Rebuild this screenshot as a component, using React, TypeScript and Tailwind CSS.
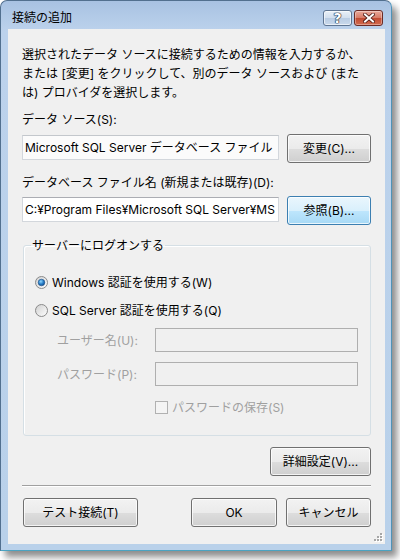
import type { ReactNode } from "react";
import clsx from "clsx";

function PushButton({ children, className, focused = false }: { children: ReactNode; className?: string; focused?: boolean }) {
  return (
    <button
      className={clsx(
        "h-[29px] shrink-0 rounded-[3px] border text-[12px] leading-[19px] text-black shadow-[inset_0_0_0_1px_rgba(255,255,255,0.75)]",
        focused
          ? "border-[#3c7fb1] bg-[linear-gradient(#eaf6fd_0%,#d9f0fc_50%,#bee6fd_51%,#a7d9f5_100%)]"
          : "border-[#707070] bg-[linear-gradient(#f2f2f2_0%,#ebebeb_50%,#dddddd_51%,#cfcfcf_100%)]",
        className
      )}
    >
      {children}
    </button>
  );
}

function Radio({ checked }: { checked?: boolean }) {
  return (
    <svg width="13" height="13" viewBox="0 0 13 13" className="shrink-0">
      <defs>
        <linearGradient id={checked ? "rb-on" : "rb-off"} x1="0" y1="0" x2="1" y2="1">
          <stop offset="0" stopColor="#cfcfcf" />
          <stop offset="1" stopColor="#ffffff" />
        </linearGradient>
        <radialGradient id="rb-dot" cx="0.4" cy="0.35" r="0.7">
          <stop offset="0" stopColor="#8fd8ff" />
          <stop offset="0.55" stopColor="#2a7fc8" />
          <stop offset="1" stopColor="#0e4d8f" />
        </radialGradient>
      </defs>
      <circle cx="6.5" cy="6.5" r="6" fill={`url(#${checked ? "rb-on" : "rb-off"})`} stroke="#8a8a8a" strokeWidth="1" />
      {checked && <circle cx="6.5" cy="6.5" r="3.3" fill="url(#rb-dot)" stroke="#1c4f87" strokeWidth="0.6" />}
    </svg>
  );
}

function ResizeGrip() {
  const dots = [
    [6, 0],
    [3, 3],
    [6, 3],
    [0, 6],
    [3, 6],
    [6, 6],
  ];
  return (
    <svg width="9" height="9" viewBox="0 0 9 9" className="absolute bottom-[2px] right-[2px]">
      {dots.map(([x, y]) => (
        <g key={`${x}-${y}`}>
          <rect x={x + 1} y={y + 1} width="2" height="2" fill="#ffffff" />
          <rect x={x} y={y} width="2" height="2" fill="#a6a6a6" />
        </g>
      ))}
    </svg>
  );
}

export default function App() {
  return (
    <div className="h-[560px] w-[400px] bg-white font-['Inter','Noto_Sans_CJK_JP',sans-serif] text-[12px] text-black">
      <div className="flex h-[551px] w-[392px] flex-col rounded-t-[7px] border border-[#52708f] border-b-[#4aa3c1] border-r-[#4f93b8] bg-[linear-gradient(#a8c2e2_0px,#bcd2ec_30px,#b9d1ea_100%)] shadow-[5px_6px_7px_rgba(0,0,0,0.45)]">
        {/* caption */}
        <div className="flex h-[28px] shrink-0 items-start">
          <span className="ml-[11px] mt-[7px] leading-[19px]">接続の追加</span>
          <div className="ml-auto mr-[8px] mt-[9px] flex gap-[2px]">
            <div className="flex h-[16px] w-[29px] items-center justify-center rounded-[3px] border border-[#5f7592] bg-[linear-gradient(#e9f0f8_0%,#d2dfee_50%,#b9cce3_51%,#c9d9ec_100%)] shadow-[inset_0_0_0_1px_rgba(255,255,255,0.6)]">
              <span className="font-['DejaVu_Sans',sans-serif] text-[14px] font-bold leading-none text-white [text-shadow:0_0_1px_#1d2d44,0_0_1px_#1d2d44,0_0_1px_#1d2d44,0_0_1px_#1d2d44]">?</span>
            </div>
            <div className="flex h-[16px] w-[29px] items-center justify-center rounded-[3px] border border-[#6b2b26] bg-[linear-gradient(#e9a99b_0%,#d77a66_50%,#c14a32_51%,#d26b4f_100%)] shadow-[inset_0_0_0_1px_rgba(255,255,255,0.35)]">
              <svg width="12" height="10" viewBox="0 0 12 10">
                <path d="M2 1.5 L10 8.5 M10 1.5 L2 8.5" stroke="#4a1712" strokeWidth="3.6" strokeLinecap="square" />
                <path d="M2 1.5 L10 8.5 M10 1.5 L2 8.5" stroke="#ffffff" strokeWidth="2" strokeLinecap="square" />
              </svg>
            </div>
          </div>
        </div>

        {/* client area */}
        <div className="relative mb-[6px] ml-[7px] mr-[6px] flex flex-1 flex-col bg-[#f0f0f0] px-[14px] pt-[16px] leading-[19px]">
          <p className="whitespace-nowrap">
            選択されたデータ ソースに接続するための情報を入力するか、
            <br />
            または [変更] をクリックして、別のデータ ソースおよび (また
            <br />
            は) プロバイダを選択します。
          </p>

          <div className="mt-[8px]">データ ソース(S):</div>
          <div className="mt-[5px] flex items-start gap-[8px]">
            <div className="mt-[1px] flex h-[25px] w-[257px] items-center overflow-hidden whitespace-nowrap border border-[#d3d7dc] border-t-[#c3c7cc] bg-[#fbfbfb] pl-[2px]">
              Microsoft SQL Server データベース ファイル
            </div>
            <PushButton className="w-[84px]">変更(C)...</PushButton>
          </div>

          <div className="mt-[10px]">データベース ファイル名 (新規または既存)(D):</div>
          <div className="mt-[4px] flex items-start gap-[8px]">
            <div className="mt-[1px] flex h-[25px] w-[257px] items-center overflow-hidden whitespace-nowrap border border-[#d3d7dc] border-t-[#abadb3] bg-white pl-[2px]">
              C:¥Program Files¥Microsoft SQL Server¥MS
            </div>
            <PushButton focused className="w-[84px]">
              参照(B)...
            </PushButton>
          </div>

          <fieldset className="ml-[1px] mt-[11px] rounded-[3px] border border-[#d5dfe5] shadow-[inset_1px_1px_0_#ffffff]">
            <legend className="ml-[7px] px-[1px] leading-[19px]">サーバーにログオンする</legend>
            <div className="flex flex-col pb-[18px] pl-[11px] pt-[18px]">
              <label className="flex items-center gap-[4px]">
                <Radio checked />
                <span>Windows 認証を使用する(W)</span>
              </label>
              <label className="mt-[9px] flex items-center gap-[4px]">
                <Radio />
                <span>SQL Server 認証を使用する(Q)</span>
              </label>

              <div className="mt-[8px] flex items-center text-[#a0a0a0]">
                <span className="ml-[22px] w-[98px]">ユーザー名(U):</span>
                <div className="h-[24px] w-[203px] border border-[#afafaf] bg-[#f0f0f0]" />
              </div>
              <div className="mt-[10px] flex items-center text-[#a0a0a0]">
                <span className="ml-[22px] w-[98px]">パスワード(P):</span>
                <div className="h-[24px] w-[203px] border border-[#afafaf] bg-[#f0f0f0]" />
              </div>
              <div className="ml-[120px] mt-[12px] flex items-center gap-[4px] text-[#a0a0a0]">
                <div className="h-[13px] w-[13px] border border-[#b1b1b1] bg-[#f4f4f4]" />
                <span>パスワードの保存(S)</span>
              </div>
            </div>
          </fieldset>

          <PushButton className="mt-[11px] w-[101px] self-end">詳細設定(V)...</PushButton>

          <div className="mt-[9px] border-b border-t border-b-white border-t-[#a0a0a0]" />

          <div className="mt-[11px] flex gap-[9px]">
            <PushButton className="ml-[1px] w-[115px]">テスト接続(T)</PushButton>
            <PushButton className="ml-auto w-[86px]">OK</PushButton>
            <PushButton className="w-[85px]">キャンセル</PushButton>
          </div>

          <ResizeGrip />
        </div>
      </div>
    </div>
  );
}
